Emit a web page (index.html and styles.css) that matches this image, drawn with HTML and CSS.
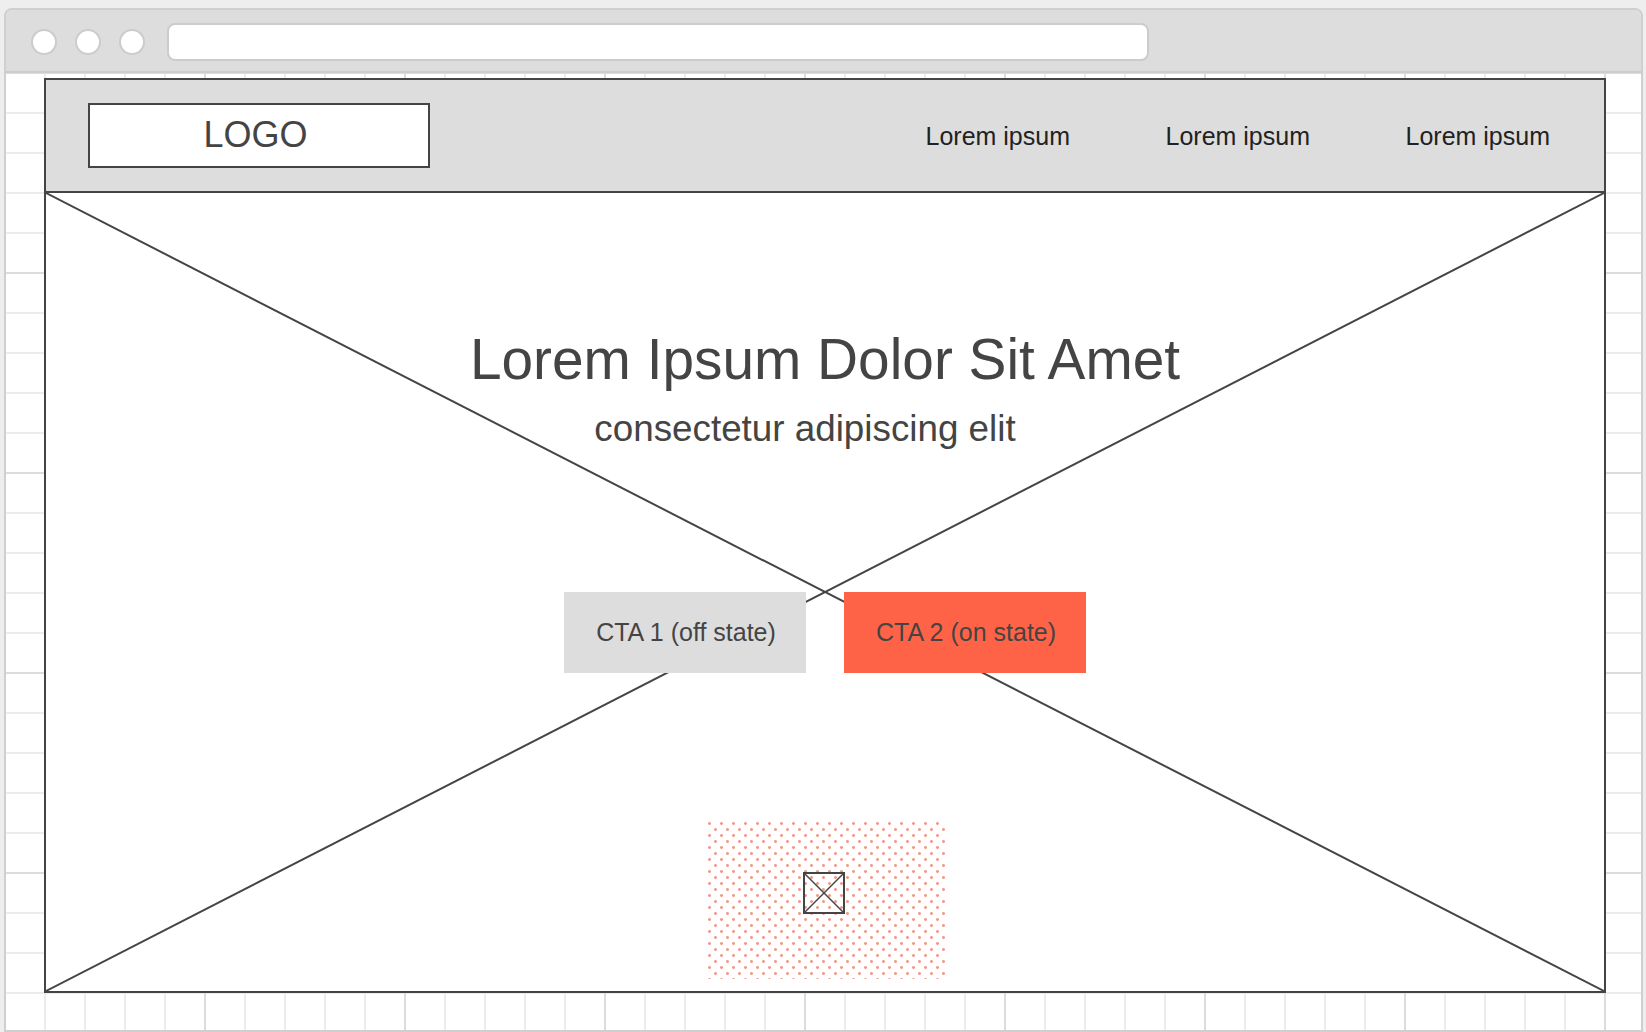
FILE: index.html
```html
<!DOCTYPE html>
<html lang="en">
<head>
<meta charset="utf-8">
<title>Wireframe</title>
<link rel="stylesheet" href="styles.css">
</head>
<body>
<div class="window">
  <div class="chrome">
    <span class="light"></span>
    <span class="light"></span>
    <span class="light"></span>
    <div class="address"></div>
  </div>
  <div class="canvas">
    <div class="wireframe">
      <header class="site-header">
        <div class="logo">LOGO</div>
        <nav class="nav">
          <a href="#">Lorem ipsum</a>
          <a href="#">Lorem ipsum</a>
          <a href="#">Lorem ipsum</a>
        </nav>
      </header>
      <section class="hero">
        <svg class="hero-x" viewBox="0 0 100 100" preserveAspectRatio="none" aria-hidden="true">
          <line x1="0" y1="0" x2="100" y2="100" vector-effect="non-scaling-stroke"/>
          <line x1="100" y1="0" x2="0" y2="100" vector-effect="non-scaling-stroke"/>
        </svg>
        <div class="hero-inner">
          <h1 class="hero-title">Lorem Ipsum Dolor Sit Amet</h1>
          <p class="hero-sub">consectetur adipiscing elit</p>
          <div class="ctas">
            <a href="#" class="cta cta-off">CTA 1 (off state)</a>
            <a href="#" class="cta cta-on">CTA 2 (on state)</a>
          </div>
          <div class="media">
            <svg class="media-icon" width="42" height="42" viewBox="0 0 42 42" aria-hidden="true">
              <rect x="1" y="1" width="40" height="40"/>
              <line x1="1" y1="1" x2="41" y2="41"/>
              <line x1="41" y1="1" x2="1" y2="41"/>
            </svg>
          </div>
        </div>
      </section>
    </div>
  </div>
</div>
</body>
</html>
```
FILE: styles.css
```css
* { box-sizing: border-box; }

html, body {
  margin: 0;
  padding: 0;
}

body {
  background: #eeeeee;
  font-family: "Liberation Sans", Arial, sans-serif;
  overflow: hidden;
}

.window {
  margin: 8px 3px 0 4px;
  height: 1024px;
  border: 2px solid #cfcfcf;
  border-radius: 8px 8px 0 0;
  display: flex;
  flex-direction: column;
  overflow: hidden;
}

.chrome {
  height: 63px;
  flex: none;
  background: #dddddd;
  border-bottom: 2px solid #cccccc;
  display: flex;
  align-items: center;
  padding: 2px 0 0 25px;
}

.light {
  width: 26px;
  height: 26px;
  border-radius: 50%;
  background: #ffffff;
  border: 2px solid #cccccc;
  margin-right: 18px;
  flex: none;
}

.light:nth-child(3) { margin-right: 22px; }

.address {
  width: 982px;
  height: 38px;
  background: #ffffff;
  border: 2px solid #cccccc;
  border-radius: 8px;
}

.canvas {
  flex: 1;
  background-color: #ffffff;
  background-image:
    linear-gradient(to right, #dcdcdc 2px, transparent 2px),
    linear-gradient(to bottom, #dcdcdc 2px, transparent 2px),
    linear-gradient(to right, #ececec 2px, transparent 2px),
    linear-gradient(to bottom, #ececec 2px, transparent 2px);
  background-size: 200px 200px, 200px 200px, 40px 40px, 40px 40px;
  background-position: 198px 0, 0 199px, 38px 0, 0 39px;
  padding: 5px 0 0 38px;
}

.wireframe {
  width: 1562px;
  height: 915px;
  border: 2px solid #444444;
  display: flex;
  flex-direction: column;
}

.site-header {
  height: 113px;
  flex: none;
  background: #dddddd;
  border-bottom: 2px solid #444444;
  display: flex;
  align-items: center;
  justify-content: space-between;
  padding: 0 54px 0 42px;
}

.logo {
  width: 342px;
  height: 65px;
  background: #ffffff;
  border: 2px solid #444444;
  display: flex;
  align-items: center;
  justify-content: center;
  font-size: 36px;
  color: #444444;
  padding: 0 7px 2px 0;
}

.nav {
  display: flex;
  gap: 95.5px;
}

.nav a {
  font-size: 25px;
  color: #222222;
  text-decoration: none;
  line-height: 30px;
}

.hero {
  position: relative;
  flex: 1;
  background: #ffffff;
}

.hero-x {
  position: absolute;
  inset: 0;
  width: 100%;
  height: 100%;
  z-index: 0;
}

.hero-x line {
  stroke: #444444;
  stroke-width: 2;
}

.hero-inner {
  position: relative;
  z-index: 1;
  display: flex;
  flex-direction: column;
  align-items: center;
  padding-top: 135px;
}

.hero-title {
  margin: 0;
  font-size: 56.8px;
  line-height: 64px;
  font-weight: normal;
  color: #444444;
}

.hero-sub {
  margin: 15px 40px 0 0;
  font-size: 36.8px;
  line-height: 44px;
  color: #444444;
}

.ctas {
  margin-top: 141px;
  display: flex;
  gap: 38px;
}

.cta {
  width: 242px;
  height: 81px;
  display: flex;
  align-items: center;
  justify-content: center;
  font-size: 25px;
  color: #444444;
  text-decoration: none;
  padding-left: 2px;
}

.cta-off { background: #dddddd; }
.cta-on { background: #ff6347; }

.media {
  margin-top: 149px;
  width: 238px;
  height: 157px;
  margin-left: 3px;
  display: flex;
  justify-content: center;
  padding: 50px 5px 0 0;
  background-image:
    radial-gradient(circle at 1.5px 1.5px, #ff9484 1px, rgba(255, 148, 132, 0) 1.8px),
    radial-gradient(circle at 1.5px 1.5px, #ff9484 1px, rgba(255, 148, 132, 0) 1.8px);
  background-size: 12px 12px, 12px 12px;
  background-position: 0 0, 6px 6px;
}

.media-icon rect {
  fill: none;
  stroke: #444444;
  stroke-width: 2;
}

.media-icon line {
  stroke: #444444;
  stroke-width: 1.5;
}
```
